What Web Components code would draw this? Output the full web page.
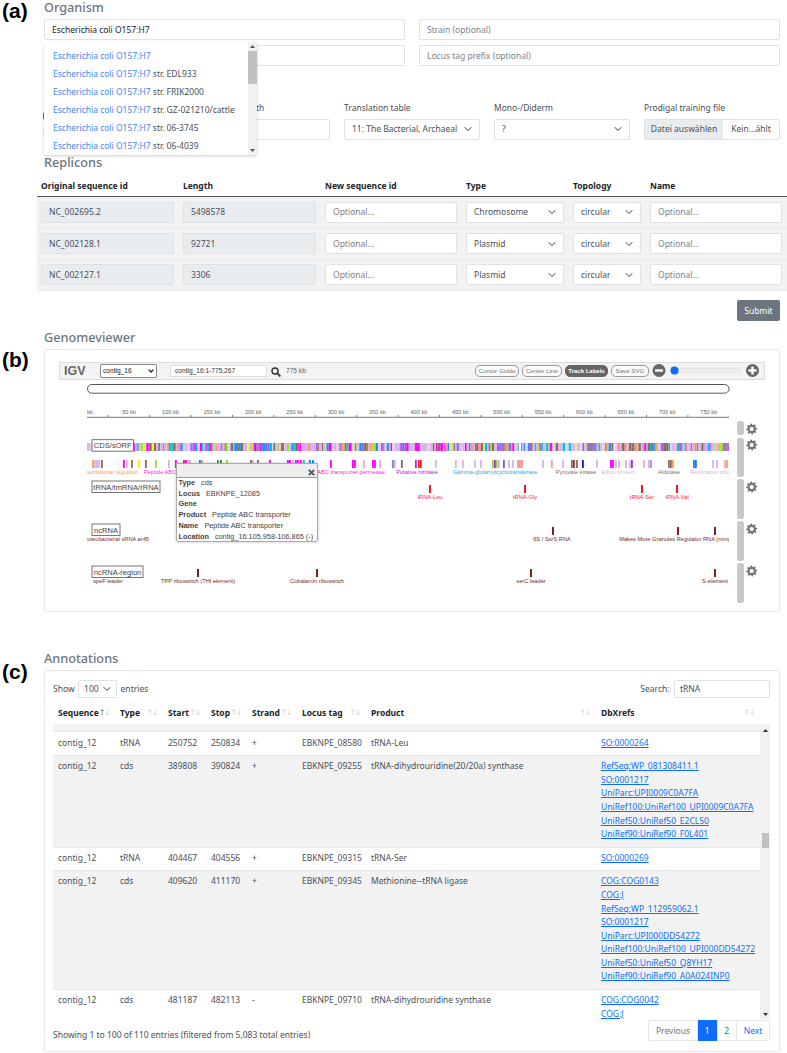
<!DOCTYPE html>
<html lang="en">
<head>
<meta charset="utf-8">
<title>Annotation</title>
<style>
html, body { margin: 0; background: #fff; }
body { font: 8.5px/13.6px "Noto Sans", sans-serif; color: #212529; }
main { display: block; padding-right: 7px; width: 780px; }
</style>
</head>
<body>
<main>
    <page-section heading="Organism" tag="(a)"><organism-form></organism-form></page-section>
    <page-section heading="Replicons" style="margin-top:15px"><replicon-table></replicon-table></page-section>
    <page-section heading="Genomeviewer" tag="(b)" style="margin-top:8.5px;--tag-top:19px"><igv-viewer></igv-viewer></page-section>
    <page-section heading="Annotations" tag="(c)" style="margin-top:39.5px;--tag-top:10px"><annotation-table></annotation-table></page-section>
</main>

<script>
const FIELD = `
    box-sizing: border-box;
    display: flex;
    align-items: center;
    height: 21px;
    padding: 0 7px;
    background: #fff;
    border: 1px solid #dee2e6;
    border-radius: 2px;
    white-space: nowrap;
    overflow: hidden;
`
const CHEVRON = `<svg width="8" height="8" viewBox="0 0 16 16" fill="none" stroke="#343a40" stroke-width="2" stroke-linecap="round" stroke-linejoin="round"><path d="M2 5l6 6 6-6"/></svg>`


class Part extends HTMLElement {

    connectedCallback(){
        if(this.shadowRoot){
            return
        }
        this.attachShadow({mode:'open'}).innerHTML = this.html
    }
}


class PageSection extends Part {

    get html(){
        const tag = this.getAttribute('tag') || ''
        return `
        <div class="tag">${tag}</div>
        <div>
            <h2>${this.getAttribute('heading')}</h2>
            <slot></slot>
        </div>
        <style>
        :host { display: grid; grid-template-columns: 44px 1fr; }
        .tag { font: bold 21px/22px "Liberation Sans", sans-serif; color: #000; padding-left: 2px; margin-top: var(--tag-top, 0); }
        h2 { margin: 0 0 4px; font: 500 12.7px/15px "Noto Sans", sans-serif; color: #6c757d; }
        </style>
        `
    }
}


class TextField extends Part {

    get html(){
        return `
        <slot></slot>
        <style>
        :host { ${FIELD} display: flex; }
        :host([placeholder]) { color: #7b838a; }
        :host([disabled]) { background: #e9ecef; color: #495057; }
        </style>
        `
    }
}


class SelectField extends Part {

    get html(){
        return `
        <span class="value"><slot></slot></span>
        ${CHEVRON}
        <style>
        :host { ${FIELD} display: flex; justify-content: space-between; gap: 4px; color: #495057; }
        .value { overflow: hidden; min-width: 0; }
        svg { flex: none; }
        </style>
        `
    }
}


class FilePicker extends Part {

    get html(){
        return `
        <span class="button">Datei auswählen</span>
        <span class="name">Kein...ählt</span>
        <style>
        :host { ${FIELD} display: flex; padding: 0; color: #495057; }
        .button { background: #e9ecef; align-self: stretch; display: flex; align-items: center; padding: 0 7px; width: 64px; justify-content: center; }
        .name { flex: 1; text-align: center; }
        </style>
        `
    }
}


class OrganismSuggest extends Part {

    get html(){
        const suffix = ['', 'str. EDL933', 'str. FRIK2000', 'str. GZ-021210/cattle', 'str. 06-3745', 'str. 06-4039']
        const items  = suffix.map(s => `<li><b>Escherichia coli O157:H7</b> ${s}</li>`).join('')
        return `
        <ul>${items}</ul>
        <div class="bar">
            <svg class="up" width="5" height="3" viewBox="0 0 5 3"><path d="M2.5 0L5 3H0z" fill="#555"/></svg>
            <div class="thumb"></div>
            <svg class="down" width="5" height="3" viewBox="0 0 5 3"><path d="M0 0h5L2.5 3z" fill="#555"/></svg>
        </div>
        <style>
        :host {
            position: absolute; left: 0; top: 22.5px; z-index: 5;
            width: 213px; height: 113px;
            display: flex; overflow: hidden;
            background: #fff; border-radius: 2px;
            box-shadow: 0 1px 3px rgba(0,0,0,.2);
        }
        ul { flex: 1; margin: 0; padding: 5px 0 0 9px; list-style: none; color: #495057; }
        li { height: 18.1px; line-height: 18.1px; white-space: nowrap; }
        b { font-weight: 400; color: #3f86f5; }
        .bar { width: 9px; background: #f1f1f1; position: relative; }
        .thumb { position: absolute; top: 9px; left: 0; right: 0; height: 33px; background: #c1c1c1; }
        .up { position: absolute; top: 3px; left: 2px; }
        .down { position: absolute; bottom: 3px; left: 2px; }
        </style>
        `
    }
}


class OrganismForm extends Part {

    get html(){
        return `
        <organism-suggest></organism-suggest>
        <div class="two">
            <text-field>Escherichia coli O157:H7</text-field>
            <text-field placeholder>Strain (optional)</text-field>
            <text-field placeholder>Sequence version</text-field>
            <text-field placeholder>Locus tag prefix (optional)</text-field>
        </div>
        <div class="five">
            <div class="checks"><i class="on"></i><i></i></div>
            <label>Min contig length<text-field></text-field></label>
            <label>Translation table<select-field>11: The Bacterial, Archaeal .</select-field></label>
            <label>Mono-/Diderm<select-field>?</select-field></label>
            <label>Prodigal training file<file-picker></file-picker></label>
        </div>
        <style>
        :host { display: block; position: relative; }
        .two { display: grid; grid-template-columns: 1fr 1fr; gap: 5px 14px; }
        .five { display: grid; grid-template-columns: repeat(5, minmax(0, 1fr)); gap: 14px; margin-top: 35px; }
        label { display: flex; flex-direction: column; gap: 4px; color: #495057; min-width: 0; }
        .checks { display: flex; flex-direction: column; gap: 8px; padding-top: 11px; }
        i { display: block; width: 8px; height: 8px; margin-left: -1px; background: #e9ecef; border-radius: 2px; }
        i.on { background: #0d6efd; }
        </style>
        `
    }
}


class RepliconTable extends Part {

    get html(){
        const rows = [
            ['NC_002695.2', '5498578', 'Chromosome'],
            ['NC_002128.1', '92721', 'Plasmid'],
            ['NC_002127.1', '3306', 'Plasmid'],
        ].map(([id, length, type]) => `
            <div class="row">
                <text-field disabled>${id}</text-field>
                <text-field disabled>${length}</text-field>
                <text-field placeholder>Optional...</text-field>
                <select-field>${type}</select-field>
                <select-field>circular</select-field>
                <text-field placeholder>Optional...</text-field>
            </div>
        `).join('')
        return `
        <div class="row head">
            <span>Original sequence id</span><span>Length</span><span>New sequence id</span>
            <span>Type</span><span>Topology</span><span>Name</span>
        </div>
        ${rows}
        <div class="actions"><button>Submit</button></div>
        <style>
        :host { display: block; margin: 0 -7px; }
        .row {
            display: grid;
            grid-template-columns: 133px 133px 132px 98px 68px 132px;
            gap: 9px;
            padding: 4.65px 5px 4.65px 4px;
            background: #f2f2f2;
            border-bottom: 1px solid #e4e6e8;
            height: 21px;
        }
        .head { background: none; border-bottom: 1px solid #555; height: 14px; padding: 5px 5px 3.5px 4px; font-weight: 700; align-items: center; }
        .actions { display: flex; justify-content: flex-end; padding: 9.5px 7px 0 0; }
        button { width: 43px; height: 21px; padding: 0; border: 0; border-radius: 2px; background: #6c757d; color: #fff; font: inherit; }
        </style>
        `
    }
}


class IgvNav extends Part {

    get html(){
        return `
        <b class="logo">IGV</b>
        <span class="locus-select">contig_16<svg width="6" height="4" viewBox="0 0 6 4" fill="none" stroke="#222" stroke-width="1.3"><path d="M.6.6L3 3l2.4-2.4"/></svg></span>
        <span class="locus">contig_16:1-775,267</span>
        <svg class="search" width="10" height="10" viewBox="0 0 10 10" fill="none" stroke="#333" stroke-width="1.4"><circle cx="4" cy="4" r="3"/><path d="M6.2 6.2L9.4 9.4" stroke-width="1.8"/></svg>
        <span class="size">775 kb</span>
        <span class="buttons">
            <span style="width:44px">Cursor Guide</span>
            <span style="width:40px">Center Line</span>
            <span class="on" style="width:43px">Track Labels</span>
            <span style="width:38px">Save SVG</span>
        </span>
        <svg width="108" height="15" viewBox="0 0 108 15">
            <circle cx="7" cy="7.5" r="6.5" fill="#666"/><rect x="3" y="6.3" width="8" height="2.4" fill="#fff"/>
            <rect x="20" y="6" width="69" height="3" rx="1.5" fill="#f1f1f1" stroke="#d4d4d4" stroke-width=".6"/>
            <circle cx="22.5" cy="7.5" r="4" fill="#0d6efd"/>
            <circle cx="100.5" cy="7.5" r="6.5" fill="#666"/><rect x="96.5" y="6.3" width="8" height="2.4" fill="#fff"/><rect x="99.3" y="3.5" width="2.4" height="8" fill="#fff"/>
        </svg>
        <style>
        :host {
            display: flex; align-items: center;
            box-sizing: border-box; height: 18px; padding: 0 4px;
            background: #f3f3f3; border: 1px solid #ddd;
            font: 6.6px/10px "Liberation Sans", sans-serif; color: #555;
            white-space: nowrap;
        }
        .logo { font-size: 12.5px; color: #666; width: 36px; flex: none; }
        .locus-select {
            box-sizing: border-box; width: 57px; height: 13.5px; padding: 0 2px;
            display: flex; align-items: center; justify-content: space-between;
            background: #fff; border: 1px solid #888; border-radius: 2px; color: #222;
        }
        .locus {
            box-sizing: border-box; width: 97px; height: 12.5px; margin-left: 13px; padding: 0 4px;
            display: flex; align-items: center;
            background: #fff; border: 1px solid #ddd; color: #333;
        }
        .search { margin-left: 4px; margin-top: 3px; flex: none; }
        .size { margin-left: 5px; color: #666; }
        .buttons { margin-left: auto; display: flex; gap: 3px; }
        .buttons span {
            box-sizing: border-box; height: 12px; line-height: 10px; text-align: center;
            border: 1px solid #999; border-radius: 5px; color: #777; background: #fafafa; font-size: 6.2px;
        }
        .buttons .on { background: #666; border-color: #666; color: #fff; font-weight: 700; font-size: 6px; }
        svg:last-of-type { margin-left: 3px; flex: none; }
        </style>
        `
    }
}


class IgvPopup extends Part {

    get html(){
        const rows = [
            ['Type', 'cds'],
            ['Locus', 'EBKNPE_12085'],
            ['Gene', ''],
            ['Product', 'Peptide ABC transporter'],
            ['Name', 'Peptide ABC transporter'],
            ['Location', 'contig_16:105,958-106,865 (-)'],
        ].map(([k, v]) => `<div><b>${k}</b>${v}</div>`).join('')
        return `
        <header><svg width="7" height="7" viewBox="0 0 7 7" stroke="#555" stroke-width="1.9"><path d="M.8.8l5.4 5.4M6.2.8L.8 6.2"/></svg></header>
        ${rows}
        <style>
        :host {
            position: absolute; left: 130.5px; top: 113px; z-index: 3;
            box-sizing: border-box; width: 142px; height: 79px; overflow: hidden;
            background: #fff; border: 1px solid #aaa; border-radius: 0 0 2px 2px;
            box-shadow: 0 0 3px rgba(0,0,0,.25);
            font: 7.3px/10.75px "Liberation Sans", sans-serif; color: #444;
            white-space: nowrap;
        }
        header { box-sizing: border-box; height: 14px; background: #eee; border-bottom: 1px solid #999; display: flex; justify-content: flex-end; align-items: flex-end; padding: 0 2px 1px; }
        div { padding-left: 2px; }
        b { margin-right: 6px; }
        </style>
        `
    }
}


class IgvViewer extends Part {

    band(){
        const palette = [
            ['#d9b3e6', 34], ['#8c6d5e', 14], ['#ff00ff', 9], ['#b45cff', 6], ['#1e90ff', 6], ['#00bfff', 4],
            ['#ffa64d', 4], ['#99e633', 4], ['#ff8c8c', 3], ['#f0f040', 2], ['#e8cdf0', 10], ['#20c0b0', 2], ['#7070e0', 2],
        ]
        const total = palette.reduce((sum, p) => sum + p[1], 0)
        let seed = 1907
        const rnd = () => (seed = (seed * 16807) % 2147483647) / 2147483647
        let x = 87
        let out = ''
        while(x < 729){
            if(x > 518 && x < 521){
                x = 521
            }
            let pick = rnd() * total
            let color = palette[0][0]
            for(const [c, weight] of palette){
                pick -= weight
                if(pick <= 0){
                    color = c
                    break
                }
            }
            const width = 0.8 + rnd() * 2.2
            out += `<rect x="${x.toFixed(1)}" y="443" width="${width.toFixed(1)}" height="8" fill="${color}"/>`
            x += width
        }
        return out
    }

    features(){
        const L = '#d9b3e6', M = '#ff00ff', B = '#8c6d5e', P = '#b020f0', U = '#0a80ff', O = '#ffa040', G = '#90e030'
        const list = [
            [92,O],[94,L],[96,L],[98,L],[101,B],[123,M],[126,L],[131,B],[138,'#f4f000'],[145,B],[155,G],[168,L],[175,M],
            [183,'#ff0080'],[185,M],[187,L],[189,L],[199,U],[201,O],[217,B],[220,'#208040'],[226,G],
            [250,B],[252,L],[257,B],[269,M],[287,M],[289,M],[292,L],[295,M],[297,M],[300,M],[303,'#20c0b0'],[309,U],[312,U],
            [330,M],[352,M],[354,M],[363,L],[372,M],[374,M],[379,L],[392,'#8080d0'],[394,L],[401,B],
            [415,P],[418,'#ff2020'],[420,'#ff2020'],[435,L],[455,L],[462,L],[474,L],[480,L],
            [492,G],[494,P],[496,G],[498,L],[503,'#6060e0'],[508,L],[512,L],[517,'#ff9090'],[519,'#ff9090'],[521,'#ff9090'],
            [542,L],[551,'#ffa0a0'],[562,L],[571,B],[573,'#a03040'],[576,B],[582,'#1010f0'],[596,L],
            [610,M],[612,M],[615,L],[618,L],[625,L],[629,L],[631,P],[643,L],[648,L],[650,'#a090e0'],
            [668,B],[670,B],[672,O],[693,U],[695,U],[712,L],[716,L],[724,L],[726,O],
        ]
        return list.map(([x, c]) => `<rect x="${x}" y="460" width="1.8" height="8" fill="${c}"/>`).join('')
    }

    bars(y, color, xs){
        return xs.map(x => `<rect x="${x - 1}" y="${y}" width="2" height="8" fill="${color}"/>`).join('')
    }

    label(x, y, color, text, anchor = 'middle'){
        return `<text x="${x}" y="${y}" fill="${color}" text-anchor="${anchor}" font-size="5.7">${text}</text>`
    }

    trackName(x, y, w, text){
        return `<rect x="${x}" y="${y}" width="${w}" height="11.5" fill="#fff" stroke="#666" stroke-width=".9"/>
            <text x="${x + w / 2}" y="${y + 8.6}" text-anchor="middle" font-size="7.6" fill="#444">${text}</text>`
    }

    gear(cx, cy){
        let d = ''
        const teeth = 8
        for(let i = 0; i < teeth * 4; i++){
            const angle = (i - 0.5) / (teeth * 4) * Math.PI * 2 - Math.PI / 2 - Math.PI / (teeth * 4)
            const r = (i % 4 === 0 || i % 4 === 1) ? 5.6 : 4.2
            d += `${i ? 'L' : 'M'}${(cx + Math.cos(angle) * r).toFixed(2)} ${(cy + Math.sin(angle) * r).toFixed(2)}`
        }
        return `<path d="${d}z" fill="#777"/><circle cx="${cx}" cy="${cy}" r="2.1" fill="#fff"/>`
    }

    get html(){
        let ruler = ''
        for(let i = 1; i <= 15; i++){
            const x = 87.7 + i * 41.4
            ruler += `<text x="${x.toFixed(1)}" y="414" text-anchor="middle">${i * 50} kb</text>`
        }
        ruler += `<text x="87" y="414">kb</text>`
        for(let i = 0; i < 16; i++){
            const x = 108.3 + i * 41.4
            ruler += `<path d="M${x.toFixed(1)} 415V417" stroke="#555" stroke-width=".7"/>`
        }

        const DARK = '#7a1f25'
        const GRAY_BARS = [[421,14],[438,39],[479,40],[521,40],[563,40]]
        const sideBars  = GRAY_BARS.map(([y, h]) => `<rect x="737" y="${y}" width="7" height="${h}" rx="2.5" fill="#c8c8c8"/>`).join('')
        const gears     = [429, 445, 487, 529, 571].map(y => this.gear(751.7, y)).join('')

        return `
        <igv-nav></igv-nav>
        <igv-popup></igv-popup>
        <svg width="706" height="224" viewBox="59 380 706 224" font-family="'Liberation Sans', sans-serif">
            <defs><clipPath id="view"><rect x="87" y="380" width="642" height="224"/></clipPath></defs>
            <rect x="87.5" y="384.5" width="641.5" height="8.7" rx="4.3" fill="#fff" stroke="#555" stroke-width="1"/>
            <g font-size="5.6" fill="#666" clip-path="url(#view)">${ruler}</g>
            <path d="M87 417.3H729" stroke="#555" stroke-width=".8"/>
            <g clip-path="url(#view)">
                ${this.band()}
                ${this.features()}
                ${this.label(138, 474, '#ffa040', 'Transcriptional regulator', 'end')}
                ${this.label(144, 474, '#ff20e0', 'Peptide ABC transporter', 'start')}
                ${this.label(351, 474, '#ff20e0', 'ABC transporter permease')}
                ${this.label(417, 474, '#b020f0', 'Putative nitrilase')}
                ${this.label(495, 474, '#20a8f0', 'Gamma-glutamylcyclotransferase')}
                ${this.label(576, 474, '#8c6d5e', 'Pyruvate kinase')}
                ${this.label(618, 474, '#d9b3e6', 'Efflux protein')}
                ${this.label(669, 474, '#8c6d5e', 'Aldolase')}
                ${this.label(690, 474, '#d9b3e6', 'Replication protein', 'start')}
                ${this.bars(485, '#ff1020', [430, 525, 642, 677])}
                ${this.label(430, 499, '#ff2030', 'tRNA-Leu')}
                ${this.label(525, 499, '#ff2030', 'tRNA-Gly')}
                ${this.label(642, 499, '#ff2030', 'tRNA-Ser')}
                ${this.label(677, 499, '#ff2030', 'tRNA-Val')}
                ${this.bars(527, DARK, [553, 678, 715])}
                ${this.label(149, 541, DARK, 'Alphaproteobacterial sRNA ar45', 'end')}
                ${this.label(552, 541, DARK, '6S / SsrS RNA')}
                ${this.label(678, 541, DARK, 'Makes More Granules Regulator RNA (mmgR)')}
                ${this.bars(569, DARK, [198, 317, 531, 715])}
                ${this.label(108, 583, DARK, 'speF leader')}
                ${this.label(198, 583, DARK, 'TPP riboswitch (THI element)')}
                ${this.label(317, 583, DARK, 'Cobalamin riboswitch')}
                ${this.label(531, 583, DARK, 'serC leader')}
                ${this.label(715, 583, DARK, 'S-element')}
            </g>
            ${this.trackName(92, 439.7, 41.5, 'CDS/sORF')}
            ${this.trackName(92, 481, 68, 'tRNA/tmRNA/rRNA')}
            ${this.trackName(92, 524, 28, 'ncRNA')}
            ${this.trackName(92, 566, 51, 'ncRNA-region')}
            ${sideBars}
            ${gears}
        </svg>
        <style>
        :host {
            display: block; position: relative; box-sizing: border-box;
            height: 263px; padding: 12px 14px 0;
            border: 1px solid #e6e8ea; border-radius: 2px;
        }
        svg { display: block; }
        </style>
        `
    }
}


class AnnotationTable extends Part {

    get html(){
        const links = text => text.split(' ').map(t => `<a>${t}</a>`).join('')
        const rows = [
            ['tRNA', '250752', '250834', '+', 'EBKNPE_08580', 'tRNA-Leu', 'SO:0000264'],
            ['cds', '389808', '390824', '+', 'EBKNPE_09255', 'tRNA-dihydrouridine(20/20a) synthase', 'RefSeq:WP_081308411.1 SO:0001217 UniParc:UPI0009C0A7FA UniRef100:UniRef100_UPI0009C0A7FA UniRef50:UniRef50_E2CLS0 UniRef90:UniRef90_F0L401'],
            ['tRNA', '404467', '404556', '+', 'EBKNPE_09315', 'tRNA-Ser', 'SO:0000269'],
            ['cds', '409620', '411170', '+', 'EBKNPE_09345', 'Methionine--tRNA ligase', 'COG:COG0143 COG:J RefSeq:WP_112959062.1 SO:0001217 UniParc:UPI000DD54272 UniRef100:UniRef100_UPI000DD54272 UniRef50:UniRef50_Q8YH17 UniRef90:UniRef90_A0A024INP0'],
            ['cds', '481187', '482113', '-', 'EBKNPE_09710', 'tRNA-dihydrouridine synthase', 'COG:COG0042 COG:J'],
        ].map(r => `<tr>
            <td>contig_12</td><td>${r[0]}</td><td>${r[1]}</td><td>${r[2]}</td><td>${r[3]}</td><td>${r[4]}</td><td>${r[5]}</td><td>${links(r[6])}</td>
        </tr>`).join('')

        const heads = ['Sequence', 'Type', 'Start', 'Stop', 'Strand', 'Locus tag', 'Product', 'DbXrefs']
            .map((h, i) => `<span class="th">${h}<span class="sort${i ? '' : ' asc'}"><i>↑</i>↓</span></span>`).join('')

        return `
        <div class="top">
            <span class="show">Show <select-field>100</select-field> entries</span>
            <span class="search">Search: <text-field>tRNA</text-field></span>
        </div>
        <div class="head">${heads}</div>
        <div class="scroll">
            <div class="body">
                <table>
                    <colgroup><col style="width:62px"><col style="width:48px"><col style="width:43px"><col style="width:41px"><col style="width:50px"><col style="width:69px"><col style="width:230px"><col style="width:164px"></colgroup>
                    <tr class="stub"><td colspan="8"></td></tr>
                    ${rows}
                </table>
            </div>
            <div class="bar">
                <svg class="up" width="5" height="3" viewBox="0 0 5 3"><path d="M2.5 0L5 3H0z" fill="#333"/></svg>
                <div class="thumb"></div>
                <svg class="down" width="5" height="3" viewBox="0 0 5 3"><path d="M0 0h5L2.5 3z" fill="#333"/></svg>
            </div>
        </div>
        <div class="foot">
            <span class="info">Showing 1 to 100 of 110 entries (filtered from 5,083 total entries)</span>
            <span class="pages"><span class="off" style="width:48px">Previous</span><span class="on" style="width:19.5px">1</span><span style="width:19.5px">2</span><span style="width:33px">Next</span></span>
        </div>
        <style>
        :host {
            display: block; box-sizing: border-box; height: 382px;
            padding: 8.5px 9px 0 8px;
            border: 1px solid #e6e8ea; border-radius: 2px;
            color: #495057;
        }
        .top { display: flex; justify-content: space-between; align-items: center; height: 18px; }
        .show, .search { display: flex; align-items: center; gap: 3.5px; }
        .show select-field { width: 39px; height: 18px; padding: 0 5px; }
        .search text-field { width: 96px; height: 18px; padding: 0 5px; margin-left: 1px; }
        .head { box-sizing: border-box; display: grid; grid-template-columns: 62px 48px 43px 41px 50px 69px 230px 164px; height: 26px; align-items: center; padding-top: 3px; width: 707px; color: #212529; font-weight: 700; }
        .th { display: flex; justify-content: space-between; padding: 0 5px; }
        .sort { font: 400 8px/13px "DejaVu Sans", sans-serif; color: #d4d6d8; white-space: nowrap; letter-spacing: -1.5px; padding-right: 1px; }
        .sort i { font-style: normal; }
        .asc i { color: #777; }
        .scroll { display: flex; height: 295px; overflow: hidden; }
        .body { width: 707px; overflow: hidden; }
        table { table-layout: fixed; width: 707px; border-collapse: collapse; }
        td { padding: 3.2px 5px 5.8px; vertical-align: top; border-top: 1px solid #e4e6e8; white-space: nowrap; }
        tr:nth-child(even) td { background: #fff; }
        tr:nth-child(odd) td { background: #f2f2f2; }
        .stub td { height: 7.5px; padding: 0; border: 0; background: #f2f2f2; }
        a { display: block; color: #0d6efd; text-decoration: underline; }
        .bar { width: 10px; background: #f1f1f1; position: relative; }
        .thumb { position: absolute; left: 2px; right: 1px; top: 109px; height: 15px; background: #c1c1c1; }
        .up { position: absolute; top: 5px; left: 3px; }
        .down { position: absolute; bottom: 3px; left: 3px; }
        .foot { display: flex; justify-content: space-between; margin-top: 1px; }
        .info { padding-top: 8px; }
        .pages { display: flex; height: 21px; border: 1px solid #e4e6e8; border-radius: 2px; box-sizing: border-box; }
        .pages span { box-sizing: border-box; display: flex; align-items: center; justify-content: center; color: #0d6efd; border-left: 1px solid #e4e6e8; }
        .pages .off { color: #6c757d; border-left: 0; }
        .pages .on { background: #0d6efd; color: #fff; margin: -1px 0; height: 21px; }
        </style>
        `
    }
}


customElements.define('page-section', PageSection)
customElements.define('text-field', TextField)
customElements.define('select-field', SelectField)
customElements.define('file-picker', FilePicker)
customElements.define('organism-suggest', OrganismSuggest)
customElements.define('organism-form', OrganismForm)
customElements.define('replicon-table', RepliconTable)
customElements.define('igv-nav', IgvNav)
customElements.define('igv-popup', IgvPopup)
customElements.define('igv-viewer', IgvViewer)
customElements.define('annotation-table', AnnotationTable)
</script>
</body>
</html>
